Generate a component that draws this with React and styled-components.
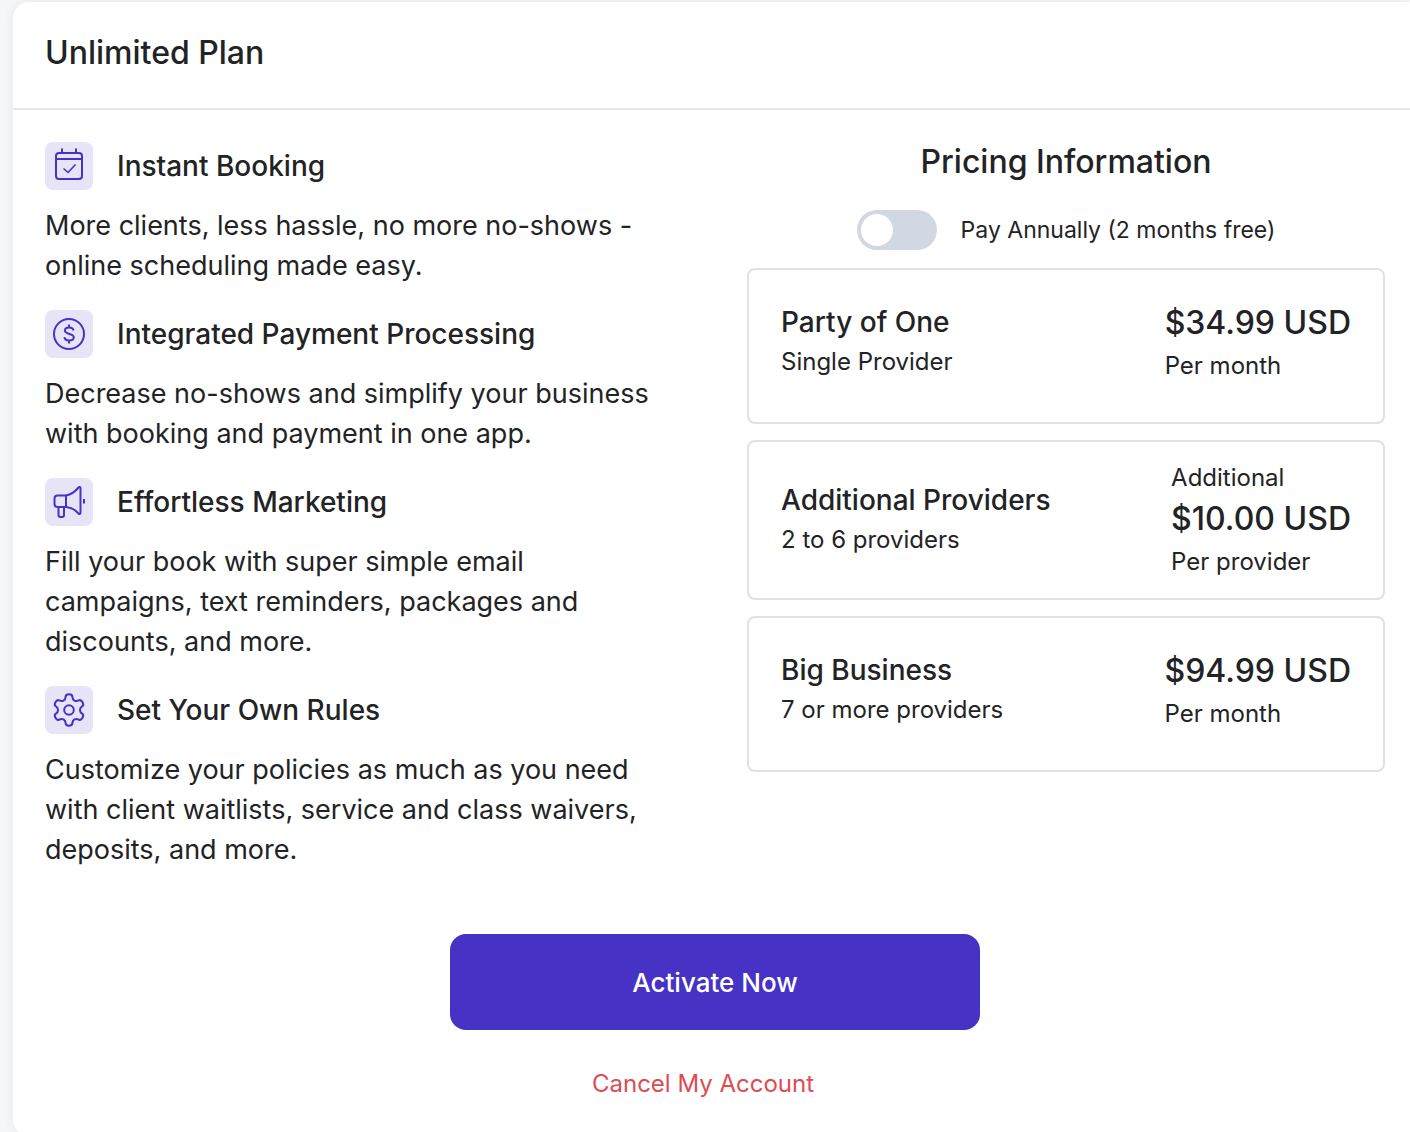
import React, { useState } from 'react';
import styled, { createGlobalStyle } from 'styled-components';

const features = [
	{
		icon: 'calendar',
		title: 'Instant Booking',
		text: 'More clients, less hassle, no more no-shows - online scheduling made easy.',
	},
	{
		icon: 'dollar',
		title: 'Integrated Payment Processing',
		text: 'Decrease no-shows and simplify your business with booking and payment in one app.',
	},
	{
		icon: 'megaphone',
		title: 'Effortless Marketing',
		text: 'Fill your book with super simple email campaigns, text reminders, packages and discounts, and more.',
	},
	{
		icon: 'gear',
		title: 'Set Your Own Rules',
		text: 'Customize your policies as much as you need with client waitlists, service and class waivers, deposits, and more.',
	},
];

const plans = [
	{
		name: 'Party of One',
		size: 'Single Provider',
		price: '$34.99 USD',
		unit: 'Per month',
	},
	{
		name: 'Additional Providers',
		size: '2 to 6 providers',
		prefix: 'Additional',
		price: '$10.00 USD',
		unit: 'Per provider',
	},
	{
		name: 'Big Business',
		size: '7 or more providers',
		price: '$94.99 USD',
		unit: 'Per month',
	},
];

// six rounded teeth around the center of a 48 x 48 box
const gearPath = () => {
	const points = [];
	for (let tooth = -90; tooth < 270; tooth += 60) {
		[
			[16, -12],
			[16, 12],
			[11.2, 18],
			[11.2, 42],
		].forEach(([radius, offset]) => {
			const angle = ((tooth + offset) * Math.PI) / 180;
			points.push([24 + radius * Math.cos(angle), 24 + radius * Math.sin(angle)]);
		});
	}
	const mid = (a, b) => `${(a[0] + b[0]) / 2} ${(a[1] + b[1]) / 2}`;
	const last = points[points.length - 1];
	return points.reduce(
		(d, point, i) =>
			`${d} Q${point[0]} ${point[1]} ${mid(point, points[(i + 1) % points.length])}`,
		`M${mid(last, points[0])}`
	);
};

const icons = {
	calendar: (
		<>
			<rect x="11" y="11" width="26" height="26" rx="3" />
			<path d="M11 17h26M17 6.5V11M31 6.5V11" />
			<path d="M18.5 26.5l4.5 4 7.5-8" strokeWidth="1.6" />
		</>
	),
	dollar: (
		<>
			<circle cx="24" cy="24" r="15" />
			<path d="M24 14.5v3M24 30.5v3M28.5 20.5c-.3-1.9-2-3-4.4-3-2.5 0-4.2 1.2-4.2 3.1 0 4.6 8.9 2 8.9 6.7 0 2-1.9 3.2-4.6 3.2-2.8 0-4.6-1.2-4.8-3.3" />
		</>
	),
	megaphone: (
		<>
			<path d="M21 17.5h-8.5a3 3 0 0 0-3 3V26a3 3 0 0 0 3 3H21z" />
			<path d="M21 17.5c5.5-1 9.5-4.3 12.5-8 .8-.9 2-.5 2 .7v24.6c0 1.2-1.2 1.6-2 .7-3-3.5-7-6-12.500-6.500" />
			<path d="M13.5 29v8a2 2 0 0 0 2 2H17a2 2 0 0 0 2-2v-8M39 21v4.5" />
		</>
	),
	gear: (
		<>
			<path d={gearPath()} />
			<circle cx="24" cy="24" r="4.8" />
		</>
	),
};

const Feature = ({ icon, title, text }) => (
	<li>
		<FeatureHeader>
			<FeatureIcon viewBox="0 0 48 48" aria-hidden="true">
				{icons[icon]}
			</FeatureIcon>
			<ItemTitle>{title}</ItemTitle>
		</FeatureHeader>
		<FeatureText>{text}</FeatureText>
	</li>
);

const Plan = ({ name, size, prefix, price, unit }) => (
	<PlanContainer $centered={Boolean(prefix)}>
		<div>
			<PlanName>{name}</PlanName>
			<SmallText>{size}</SmallText>
		</div>
		<div>
			{prefix && <SmallText>{prefix}</SmallText>}
			<Price>{price}</Price>
			<SmallText>{unit}</SmallText>
		</div>
	</PlanContainer>
);

const App = () => {
	const [annual, setAnnual] = useState(false);

	return (
		<>
			<GlobalStyle />
			<PlanCard>
				<CardHeader>
					<CardTitle>Unlimited Plan</CardTitle>
				</CardHeader>
				<CardBody>
					<Columns>
						<FeatureList>
							{features.map((feature) => (
								<Feature key={feature.title} {...feature} />
							))}
						</FeatureList>
						<Pricing>
							<PricingTitle>Pricing Information</PricingTitle>
							<ToggleLabel>
								<Toggle
									type="checkbox"
									role="switch"
									checked={annual}
									onChange={(e) => setAnnual(e.target.checked)}
								/>
								Pay Annually (2 months free)
							</ToggleLabel>
							<PlanList>
								{plans.map((plan) => (
									<Plan key={plan.name} {...plan} />
								))}
							</PlanList>
						</Pricing>
					</Columns>
					<Actions>
						<ActivateButton type="button">Activate Now</ActivateButton>
						<CancelLink href="#cancel">Cancel My Account</CancelLink>
					</Actions>
				</CardBody>
			</PlanCard>
		</>
	);
};

export default App;

const GlobalStyle = createGlobalStyle`
	* {
		box-sizing: border-box;
	}
	body {
		margin: 0;
		background-color: #f6f7f9;
		color: #222325;
		font-family: Inter, 'Liberation Sans', sans-serif;
	}
	h1, h2, h3, p, ul {
		margin: 0;
		padding: 0;
	}
	ul {
		list-style: none;
	}
`;

const PlanCard = styled.main`
	margin: 2px 0 0 13px;
	background-color: white;
	border-radius: 16px 0 0 16px;
	box-shadow: 0 0 12px rgba(30, 40, 60, 0.08);
`;

const CardHeader = styled.header`
	padding: 31px 32px 35px;
	border-bottom: 2px solid #e6e7e9;
`;

const CardTitle = styled.h1`
	font-size: 32px;
	line-height: 40px;
	font-weight: 500;
`;

const CardBody = styled.div`
	padding: 32px 25px 32px 32px;
`;

const Columns = styled.div`
	display: grid;
	grid-template-columns: 1fr 1fr;
	gap: 64px;
`;

const FeatureList = styled.ul`
	display: flex;
	flex-direction: column;
	gap: 24px;
	padding-right: 16px;
`;

const FeatureHeader = styled.div`
	display: flex;
	align-items: center;
	gap: 24px;
	margin-bottom: 16px;
`;

const FeatureIcon = styled.svg`
	width: 48px;
	height: 48px;
	border-radius: 8px;
	background-color: #e8e4f7;
	fill: none;
	stroke: #4632c4;
	stroke-width: 2;
	stroke-linejoin: round;
`;

const ItemTitle = styled.h2`
	font-size: 28px;
	line-height: 40px;
	font-weight: 500;
`;

const FeatureText = styled.p`
	font-size: 27px;
	line-height: 40px;
`;

const Pricing = styled.section`
	display: flex;
	flex-direction: column;
`;

const PricingTitle = styled.h2`
	margin-bottom: 28px;
	font-size: 32px;
	line-height: 40px;
	font-weight: 500;
	text-align: center;
`;

const ToggleLabel = styled.label`
	display: flex;
	align-items: center;
	justify-content: center;
	gap: 24px;
	margin-bottom: 18px;
	font-size: 23px;
	line-height: 40px;
	cursor: pointer;
`;

const Toggle = styled.input`
	appearance: none;
	display: flex;
	width: 80px;
	height: 40px;
	margin: 0;
	padding: 4px;
	border-radius: 20px;
	background-color: #d2d8e3;
	cursor: pointer;
	&::before {
		content: '';
		width: 32px;
		height: 32px;
		border-radius: 50%;
		background-color: white;
	}
	&:checked {
		justify-content: flex-end;
		background-color: #4632c4;
	}
`;

const PlanList = styled.div`
	display: flex;
	flex-direction: column;
	gap: 16px;
`;

const PlanContainer = styled.article`
	display: flex;
	justify-content: space-between;
	align-items: ${({ $centered }) => ($centered ? 'center' : 'flex-start')};
	padding: ${({ $centered }) => ($centered ? '16px 32px' : '32px 32px 36px')};
	border: 2px solid #e0e1e3;
	border-radius: 8px;
`;

const PlanName = styled.h3`
	font-size: 28px;
	line-height: 40px;
	font-weight: 500;
`;

const SmallText = styled.p`
	font-size: 24px;
	line-height: 40px;
`;

const Price = styled.p`
	margin-bottom: 2px;
	font-size: 32px;
	line-height: 42px;
	font-weight: 500;
`;

const Actions = styled.div`
	display: flex;
	flex-direction: column;
	align-items: center;
	gap: 34px;
	margin-top: 64px;
`;

const ActivateButton = styled.button`
	width: 530px;
	max-width: 100%;
	height: 96px;
	border: none;
	border-radius: 16px;
	background-color: #4632c4;
	color: white;
	font-family: inherit;
	font-size: 26px;
	font-weight: 500;
	cursor: pointer;
	&:hover {
		background-color: #3b29ab;
	}
`;

const CancelLink = styled.a`
	margin-right: 24px;
	color: #dc4c55;
	font-size: 24px;
	line-height: 40px;
	text-decoration: none;
`;
